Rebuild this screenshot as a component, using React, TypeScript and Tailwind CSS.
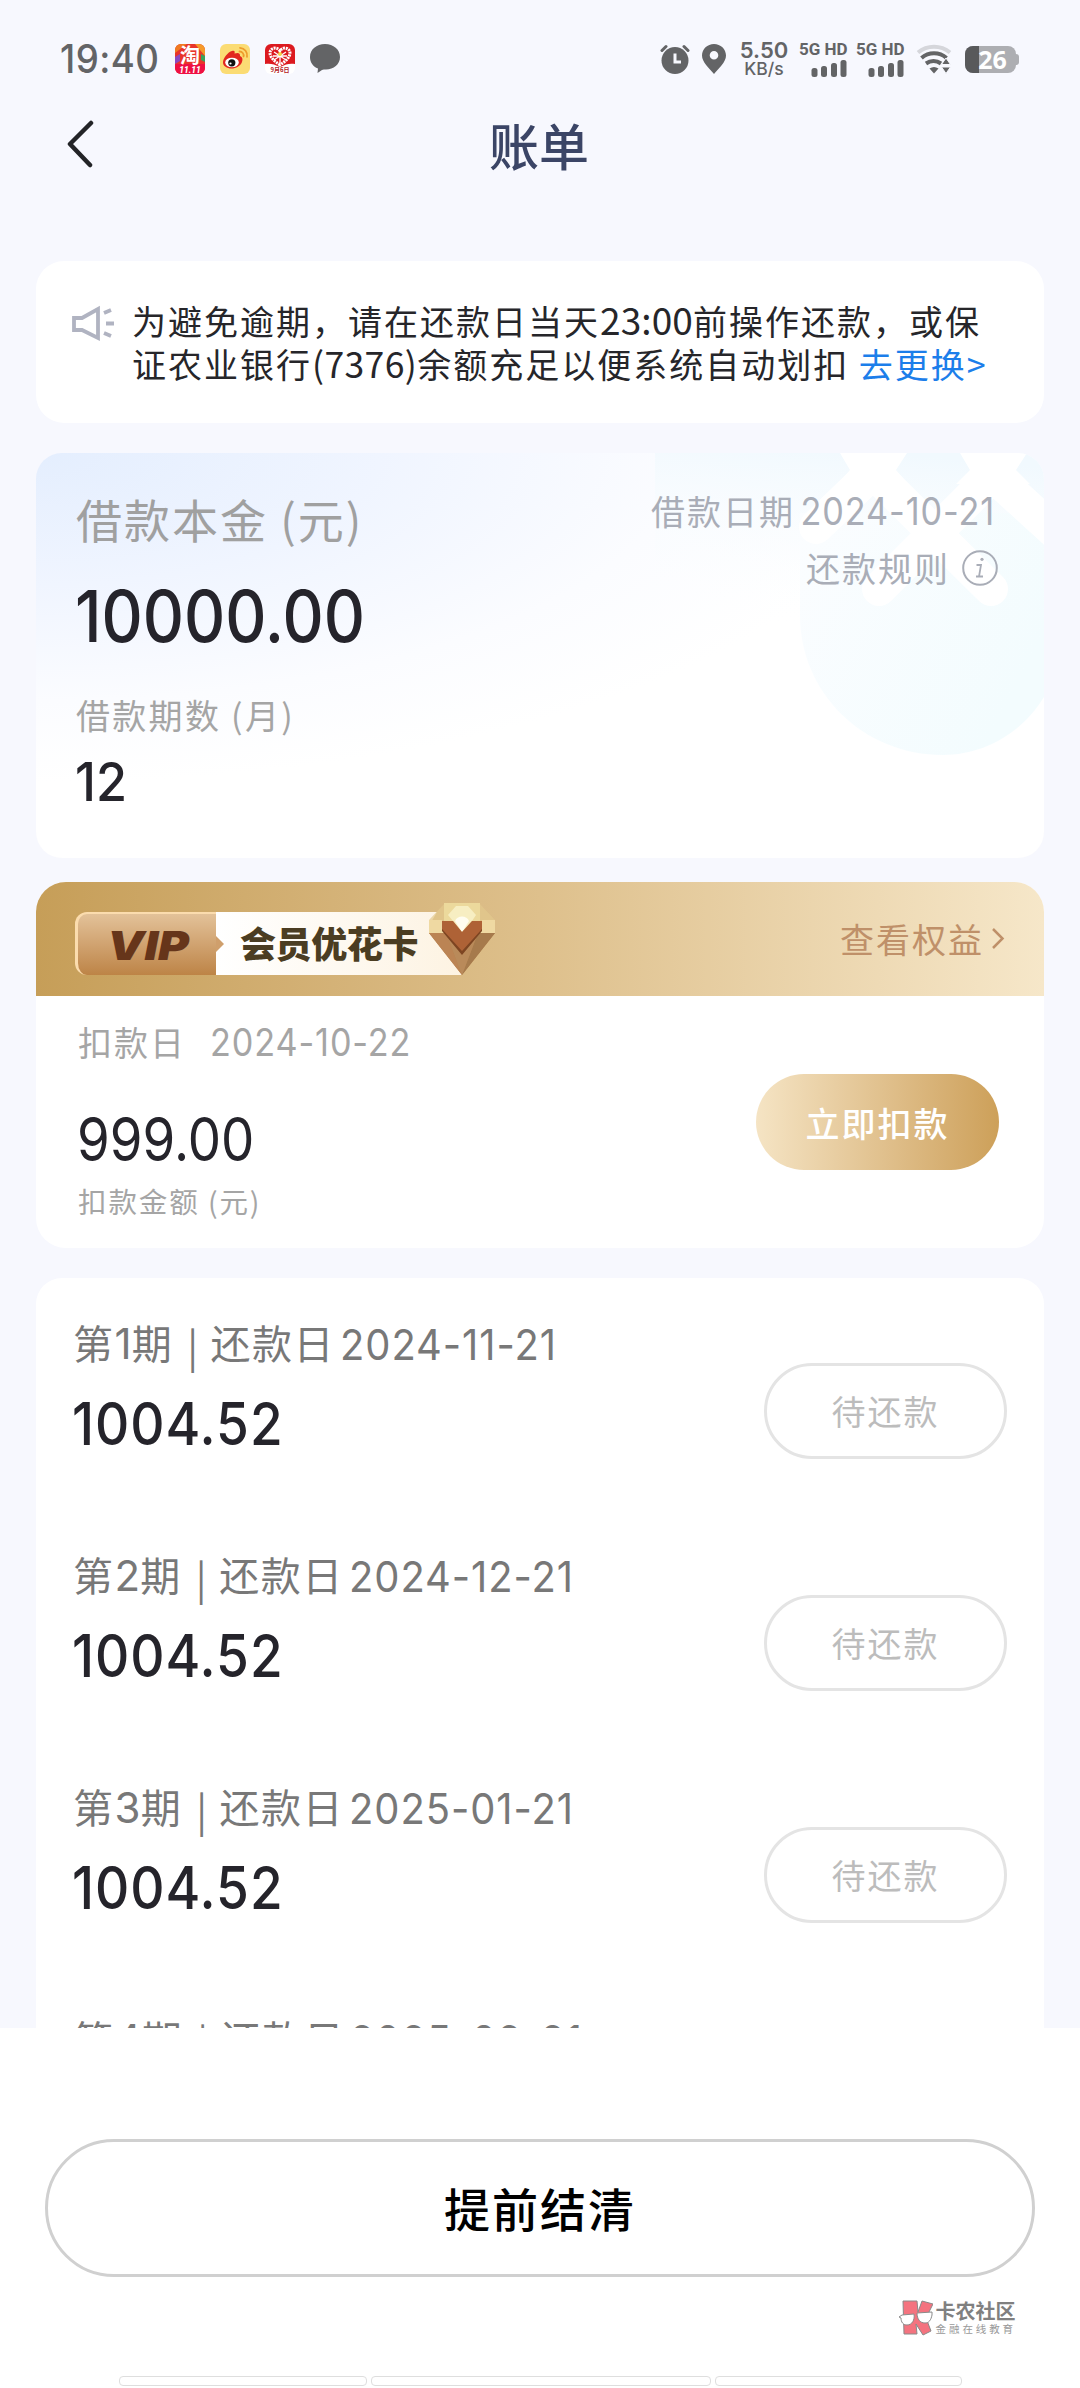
import { clsx } from "clsx";

const NUM = "font-['Inter','Noto_Sans_CJK_SC',sans-serif]";

const PERIODS = [
  { no: 1, date: "2024-11-21", amount: "1004.52" },
  { no: 2, date: "2024-12-21", amount: "1004.52" },
  { no: 3, date: "2025-01-21", amount: "1004.52" },
  { no: 4, date: "2025-02-21", amount: "1004.52" },
];

function Signal() {
  return (
    <div className="flex h-9 w-[48px] flex-col items-end justify-between">
      <div className="w-full text-center font-['Roboto',sans-serif] text-[17px] leading-[16px] font-bold whitespace-nowrap">
        5G HD
      </div>
      <svg className="h-[17px] w-9" viewBox="0 0 36 17" fill="currentColor">
        <rect x="0.5" y="8" width="6" height="9" rx="2.5" />
        <rect x="10" y="6" width="6" height="11" rx="2.5" />
        <rect x="20" y="3" width="6" height="14" rx="2.5" />
        <rect x="29.5" y="0" width="6" height="17" rx="2.5" />
      </svg>
    </div>
  );
}

function StatusBar() {
  return (
    <div className="flex h-[118px] items-center pr-[61px] pl-[60px] text-[#636466]">
      <span className={clsx(NUM, "w-[115px] origin-left scale-x-94 text-[39px] leading-[50px] font-medium tracking-[0.500px]")}>19:40</span>
      <div className="flex gap-[15px]">
        <svg className="size-[30px]" viewBox="0 0 30 30">
          <rect width="30" height="30" rx="6" fill="#e8352b" />
          <path d="M0 6a6 6 0 0 1 6-6h6L0 9z" fill="#f07a22" />
          <path d="M20 0h4a6 6 0 0 1 6 6v6z" fill="#f59a2a" />
          <path d="M0 13l5-3v7l-5 3z" fill="#8a4ac0" />
          <path d="M26 10l4 2v6l-4-2z" fill="#3aa35c" />
          <path d="M0 20h30v4a6 6 0 0 1-6 6H6a6 6 0 0 1-6-6z" fill="#ef1043" />
          <text x="15" y="18.500" textAnchor="middle" fontSize="20" fontWeight="700" fill="#fff" fontFamily="Noto Sans CJK SC">淘</text>
          <text x="15" y="28.500" textAnchor="middle" fontSize="8.500" fontWeight="800" fontStyle="italic" fill="#fff" fontFamily="Roboto">11.11</text>
        </svg>
        <svg className="size-[30px]" viewBox="0 0 30 30">
          <rect width="30" height="30" rx="6" fill="#fbdc74" />
          <path d="M12 7c3-1 3 1 2.500 2.500 3-1 6-1 5.500 2.500 2.500 1 3 3 2 6-1.500 4-6 6.500-10.500 6.500S3 22 3 18.500C3 14 8 8 12 7z" fill="#e2261f" />
          <ellipse cx="12" cy="18.500" rx="6.800" ry="4.800" fill="#fff" />
          <circle cx="11.800" cy="18.800" r="3.600" fill="#111" />
          <circle cx="10.500" cy="19.500" r="1.100" fill="#fff" />
          <path d="M19.500 7.500a4 4 0 0 1 4 5M20 3.800a7.500 7.500 0 0 1 7 9" fill="none" stroke="#ee9c2c" strokeWidth="1.800" strokeLinecap="round" />
        </svg>
        <svg className="size-[30px]" viewBox="0 0 30 30">
          <rect width="30" height="30" rx="6" fill="#fff" />
          <path d="M0 6a6 6 0 0 1 6-6h18a6 6 0 0 1 6 6v14c-5-1-9 0-15 3-6-3-10-4-15-3z" fill="#dc1a20" />
          <path d="M15 21C9 17 5 13 5 9c0-5 7-7 10-2 3-5 10-3 10 2 0 4-4 8-10 12z" fill="none" stroke="#fff" strokeWidth="3" strokeDasharray="2 0.8" />
          <path d="M9 8l12 8M21 8L9 16M15 5v14M8 12h14" stroke="#fff" strokeWidth="1.300" />
          <circle cx="15" cy="10" r="2" fill="#f5d24a" />
          <text x="15" y="28" textAnchor="middle" fontSize="6" fontWeight="700" fill="#b3221f" fontFamily="Noto Sans CJK SC">9月6日</text>
        </svg>
        <svg className="size-[30px]" viewBox="0 0 30 30" fill="currentColor">
          <path d="M15 0c8.500 0 15 5.500 15 13s-6.500 12.500-14 12.500c-1.500 0-3 0-4 .5L7.500 29l.5-4.500C3 22.500 0 18.500 0 13 0 5.500 6.500 0 15 0z" />
        </svg>
      </div>

      <div className="ml-auto flex items-center">
        <svg className="h-[30px] w-[30px]" viewBox="0 0 30 30" fill="currentColor">
          <circle cx="15" cy="16.500" r="13.500" />
          <path d="M2 6.500L6 2.500M28 6.500L24 2.500" stroke="currentColor" strokeWidth="3" strokeLinecap="round" />
          <path d="M15 9.500v8.500h6" fill="none" stroke="#f7f8fe" strokeWidth="3" />
        </svg>
        <svg className="ml-[12px] h-[30px] w-6" viewBox="0 0 24 30" fill="currentColor">
          <path fillRule="evenodd" d="M12 0c6.600 0 12 5 12 11.500C24 18 17 24 12 30 7 24 0 18 0 11.500 0 5 5.400 0 12 0zm0 7a4.300 4.300 0 1 0 0 8.600A4.300 4.300 0 0 0 12 7z" />
        </svg>
        <div className={clsx(NUM, "ml-[13px] flex h-9 w-[50px] flex-col items-center justify-between whitespace-nowrap")}>
          <span className="text-[22px] leading-[18px] font-semibold">5.50</span>
          <span className="text-[17.500px] leading-[16px] font-medium">KB/s</span>
        </div>
        <div className="ml-[10px] flex gap-[9px]">
          <Signal />
          <Signal />
        </div>
        <svg className="ml-[12px] h-[30px] w-[38px]" viewBox="0 0 38 30" fill="none">
          <path d="M2 8.500a25 25 0 0 1 32 0" stroke="#d5d6db" strokeWidth="4" />
          <path d="M5.500 14a19 19 0 0 1 25 0M10 19.500a13 13 0 0 1 15 0" stroke="currentColor" strokeWidth="4" />
          <path d="M13.500 24.500q4.500-3 9 0L18 29.500z" fill="currentColor" />
          <path d="M25.500 20.500h9L30 14zM25.500 23h9L30 29.500z" fill="currentColor" stroke="#f7f8fe" strokeWidth="1" />
        </svg>
        <div className="relative ml-[11px] flex h-[27px] w-[51px] items-center justify-center overflow-hidden rounded-[8px] bg-[#adaeb2]">
          <div className="absolute inset-y-0 left-0 w-[14px] bg-[#58595b]" />
          <span className="relative ml-1 font-['Open_Sans',sans-serif] text-[25px] leading-none font-bold text-white">26</span>
        </div>
        <div className="h-[11px] w-[3px] rounded-r-full bg-[#adaeb2]" />
      </div>
    </div>
  );
}

function Diamond() {
  return (
    <svg className="absolute top-[-10px] left-[353px] h-[74px] w-[68px]" viewBox="0 0 68 74">
      <path d="M17 1h34l16 17v12H1V18z" fill="#e3c98d" opacity="0.7" />
      <path d="M16 1h36v18H16z" fill="#ecd99c" />
      <path d="M1 18h13v8l4 5H1zM67 18H54v8l-4 5h17z" fill="#efd9a2" />
      <path d="M1 31h66L34 73z" fill="#b5844f" />
      <path d="M1 31h17l16 42z" fill="#bb8454" />
      <path d="M67 31H50L34 73z" fill="#a67a4c" />
      <path d="M18 31l16 20 16-20-16 42z" fill="#b98a5a" />
      <path d="M25 19l-5-6 8-9h12l8 9-4 6-10 11z" fill="#f7eec2" />
      <path d="M27 19c2-6 12-6 14 0l-7 11z" fill="#fffdf0" />
      <path d="M14 19h11l9 11 10-11h10v9L34 52 14 28z" fill="#ae6236" />
      <path d="M14 27l20 22 20-22v2L34 53 14 29z" fill="#7d4522" />
    </svg>
  );
}

function VipBadge() {
  return (
    <div className="relative flex h-[63px] w-[425px]">
      <div className="flex h-full w-[141px] items-center justify-center rounded-l-[12px] border-t-2 border-l-3 border-[#fbdcae] bg-gradient-to-b from-[#e3c299] to-[#bd8446]">
        <svg className="h-10 w-[90px]" viewBox="0 0 90 40">
          <text x="5" y="34.500" fontSize="40" fontWeight="900" fontStyle="italic" fontFamily="Inter" fill="#66351a" textLength="82" lengthAdjust="spacingAndGlyphs">
            VIP
          </text>
        </svg>
      </div>
      <svg className="absolute top-0 left-[141px] h-[63px] w-[246px]" viewBox="0 0 246 63">
        <defs>
          <linearGradient id="vipLabel">
            <stop offset="0" stopColor="#ffffff" />
            <stop offset="1" stopColor="#fdf3e2" />
          </linearGradient>
        </defs>
        <path d="M0 0h221l-7 12 32 51H0z" fill="url(#vipLabel)" />
        <path d="M0 24l8 8-8 8z" fill="#cf9f6c" />
      </svg>
      <span className="relative ml-[24px] font-['Noto_Sans_CJK_SC',sans-serif] text-[36px] leading-[61px] font-black tracking-[-0.4px] whitespace-nowrap text-[#4b3d22]">
        会员优花卡
      </span>
      <Diamond />
    </div>
  );
}

// pale coin artwork behind the loan summary
function CardArt() {
  return (
    <svg className="absolute top-0 right-0 h-[405px] w-[389px]" viewBox="0 0 389 405">
      <defs>
        <linearGradient id="haze" x1="0.600" y1="0" x2="0.400" y2="1">
          <stop offset="0" stopColor="#f1f9fe" />
          <stop offset="1" stopColor="#ffffff" stopOpacity="0" />
        </linearGradient>
        <linearGradient id="coin" x1="0" y1="0" x2="1" y2="0.500">
          <stop offset="0" stopColor="#fbfdff" />
          <stop offset="1" stopColor="#f3fcfe" />
        </linearGradient>
      </defs>
      <rect width="389" height="180" fill="url(#haze)" />
      <path d="M145 60h244v184c-22 36-60 58-101 58-80 0-143-62-143-140z" fill="url(#coin)" />
      <g stroke="#ffffff" strokeWidth="34" strokeLinecap="round" fill="none">
        <path d="M213 24L161 74M223 24L336 136M334 26L224 136M342 26l66 60" />
      </g>
      <path d="M185 0h67l-11 17h-46zM305 0h67l-11 17h-46z" fill="#ffffff" />
      <path d="M195 17h46l12 14h-70zM315 17h46l14 14h-74z" fill="#ffffff" />
    </svg>
  );
}

export default function App() {
  return (
    <div className="flex h-[2388px] w-[1080px] flex-col overflow-hidden bg-[#f7f8fe] font-['Noto_Sans_CJK_SC',sans-serif]">
      <StatusBar />

      <header className="flex h-[143px] shrink-0 items-start justify-between pr-[69px] pl-[67px]">
        <svg className="h-[52px] w-7" viewBox="0 0 28 52" fill="none" stroke="#232427" strokeWidth="4.500" strokeLinecap="round" strokeLinejoin="round">
          <path d="M24 5L3 26l20 21" />
        </svg>
        <h1 className="text-[50px] leading-[52px] font-medium text-[#3b4566]">账单</h1>
        <span className="w-7" />
      </header>

      <section className="mx-9 flex h-[162px] shrink-0 rounded-[28px] bg-white pt-[39px] pl-9">
        <svg className="mt-[5px] h-[38px] w-11" viewBox="0 0 44 38" fill="none" stroke="#b0b3c1" strokeWidth="3.800">
          <path d="M2 13h8L26 4v29L10 25H2z" />
          <path d="M32 8l7-3M34 18.500h8M32 28l7 3" />
        </svg>
        <p className="ml-[16px] text-[34px] leading-[42.500px] tracking-[2px] whitespace-nowrap text-[#26262a]">
          为避免逾期，请在还款日当天
          <span className="text-[37px] leading-none tracking-[0.100px]">23:00</span>
          前操作还款，或保
          <br />
          证农业银行<span className="text-[35.500px] leading-none tracking-[0.400px]">(7376)</span>余额充足以便系统自动划扣{" "}
          <a className="text-[#1c7eea]">去更换&gt;</a>
        </p>
      </section>

      <section className="relative mx-9 mt-[30px] h-[405px] shrink-0 overflow-hidden rounded-[26px] bg-white bg-[radial-gradient(ellipse_860px_330px_at_0_0,#e4eefe_0%,#f0f5ff_40%,#fbfcff_75%,#ffffff_100%)]">
        <CardArt />
        <div className="relative flex justify-between pr-[46px] pl-10">
          <div className="flex flex-col items-start pt-[36px]">
            <span className="text-[46px] leading-[58px] tracking-[2px] text-[#a0a0a0]">借款本金 (元)</span>
            <span className={clsx(NUM, "mt-[33px] -ml-px origin-left scale-x-90 text-[71px] leading-[72px] font-medium text-[#25242b]")}>10000.00</span>
            <span className="mt-[41px] text-[34px] leading-[44px] tracking-[2.300px] text-[#a5a5a5]">借款期数 (月)</span>
            <span className={clsx(NUM, "mt-[17px] -ml-px origin-left scale-x-95 text-[53px] leading-[56px] font-medium text-[#25242b]")}>12</span>
          </div>
          <div className="flex flex-col items-end pt-[36px] text-[34px] leading-[44px] tracking-[2px] text-[#a9adb7]">
            <div className="flex pr-[3px]">
              <span className="-mr-[16px]">借款日期</span>
              <span className={clsx(NUM, "origin-right scale-x-90 text-[38px] tracking-[1px]")}>2024-10-21</span>
            </div>
            <div className="mt-[13px] flex items-center">
              <span>还款规则</span>
              <svg className="ml-[12px] size-9" viewBox="0 0 36 36" fill="none" stroke="#a9adb7" strokeWidth="2">
                <circle cx="18" cy="18" r="16.800" />
                <path d="M14.500 15h4.500l-2 11.500h4M14 26.500h3" strokeWidth="1.800" />
                <circle cx="20" cy="9.300" r="1.600" fill="#a9adb7" stroke="none" />
              </svg>
            </div>
          </div>
        </div>
      </section>

      <section className="mx-9 mt-6 h-[366px] shrink-0 overflow-hidden rounded-[30px] bg-white">
        <div className="flex h-[114px] items-start justify-between bg-gradient-to-r from-[#c69e58] via-[#dec08c] to-[#f6e7c9] pt-[30px] pr-[39px] pl-[39px]">
          <VipBadge />
          <div className="mt-[5px] flex items-center text-[34px] leading-[44px] tracking-[2px] text-[#bf9069]">
            查看权益
            <svg className="ml-[7px] h-6 w-[14px]" viewBox="0 0 14 24" fill="none" stroke="#bf9069" strokeWidth="2.500">
              <path d="M2 2l9.500 9.500L2 21" />
            </svg>
          </div>
        </div>
        <div className="flex justify-between pr-[45px] pl-[42px]">
          <div className="flex flex-col items-start text-[#a5a5a5]">
            <div className="mt-[24px] flex gap-[24px] leading-[44px]">
              <span className="text-[34px] tracking-[2px]">扣款日</span>
              <span className={clsx(NUM, "origin-left scale-x-90 text-[38px] tracking-[1px]")}>2024-10-22</span>
            </div>
            <span className={clsx(NUM, "mt-[45px] -ml-px origin-left scale-x-88 text-[60px] leading-[60px] text-[#25242b]")}>999.00</span>
            <span className="mt-[12px] text-[28.500px] leading-[40px] tracking-[1.900px]">扣款金额 (元)</span>
          </div>
          <button className="mt-[78px] h-24 w-[243px] rounded-full bg-gradient-to-r from-[#f5e4c4] to-[#cda059] text-[34px] font-medium tracking-[2px] text-white">
            立即扣款
          </button>
        </div>
      </section>

      <section className="mx-9 mt-[30px] min-h-0 flex-1 overflow-hidden rounded-t-[26px] bg-white pt-[41px]">
        {PERIODS.map((p) => (
          <div key={p.no} className="flex h-[232px] justify-between pr-[37px] pl-[37px]">
            <div className="flex flex-col items-start">
              <div className={clsx(NUM, "flex text-[40px] leading-[52px] tracking-[1.500px] whitespace-nowrap text-[#787878]")}>
                <span>
                  第<span className="text-[42px] leading-none tracking-[0.200px]">{p.no}</span>期
                </span>
                <span className="mr-[11px] ml-[14px] font-['Noto_Sans_CJK_SC',sans-serif]">|</span>
                <span>还款日</span>
                <span className="ml-[5px] origin-left scale-x-95 text-[42px] tracking-[1px]">{p.date}</span>
              </div>
              <span className={clsx(NUM, "mt-[23px] -ml-px origin-left scale-x-90 text-[59px] leading-[60px] font-medium tracking-[1.100px] text-[#25242b]")}>{p.amount}</span>
            </div>
            <button className="mt-[44px] h-24 w-[243px] rounded-full border-3 border-[#e4e4e4] pb-0.5 text-[34px] tracking-[2px] text-[#bcbcbc]">
              待还款
            </button>
          </div>
        ))}
      </section>

      <footer className="flex h-[360px] shrink-0 flex-col items-center bg-white">
        <button className="mt-[111px] h-[138px] w-[990px] rounded-full border-3 border-[#d0d0d0] pb-0.5 text-[46px] font-medium tracking-[2px] text-black">
          提前结清
        </button>
        <div className="mt-[23px] mr-[64px] flex items-center self-end">
          <svg className="h-9 w-[34px]" viewBox="0 0 34 36" stroke="#8a8a8a" strokeWidth="1">
            <path d="M4 1h14l1 11 4-11 11 3-7 14 5 13-8 4-7-11 1 10H5z" fill="#f4737f" />
            <path d="M0 17l3-2 12-1c1 6-2 11-7 11-4 0-6-3-6-7zM18 13l15-1v3c-1 5-3 8-7 8-5 0-8-4-8-10z" fill="#fff" />
          </svg>
          <div className="ml-[3px] flex flex-col text-[#808080]">
            <span className="text-[20px] leading-[22px] font-bold">卡农社区</span>
            <span className="text-[10.500px] leading-[14px] tracking-[2.900px] text-[#999]">金融在线教育</span>
          </div>
        </div>
        <div className="mt-auto mb-[2px] flex gap-1">
          <span className="h-[10px] w-[248px] rounded-[4px] border border-[#dedede]" />
          <span className="h-[10px] w-[340px] rounded-[4px] border border-[#dedede]" />
          <span className="h-[10px] w-[247px] rounded-[4px] border border-[#dedede]" />
        </div>
      </footer>
    </div>
  );
}
